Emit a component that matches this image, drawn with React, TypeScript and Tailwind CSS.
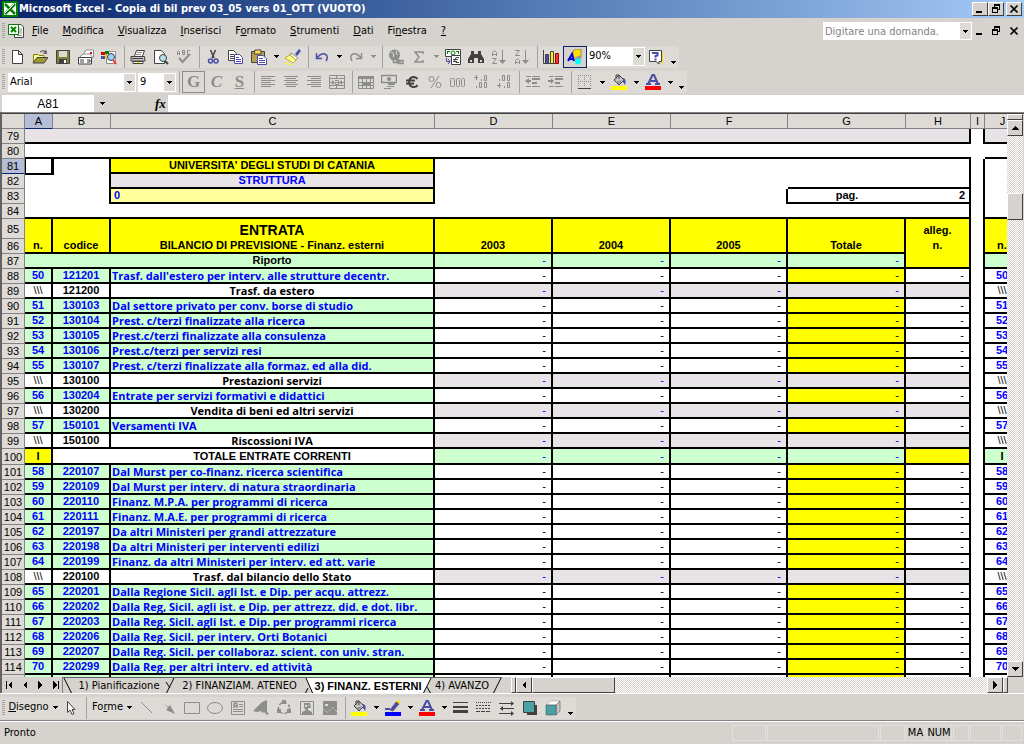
import { ReactNode } from 'react';
import clsx from 'clsx';

type Kind = 'item' | 'sub' | 'total';
type Row = [number, Kind, string, string, string];

const rows: Row[] = [
    [88, 'item', '50', '121201', "Trasf. dall'estero per interv. alle strutture decentr."],
    [89, 'sub', '\\\\\\', '121200', 'Trasf. da estero'],
    [90, 'item', '51', '130103', 'Dal settore privato per conv. borse di studio'],
    [91, 'item', '52', '130104', 'Prest. c/terzi finalizzate alla ricerca'],
    [92, 'item', '53', '130105', 'Prest.c/terzi finalizzate alla consulenza'],
    [93, 'item', '54', '130106', 'Prest.c/terzi per servizi resi'],
    [94, 'item', '55', '130107', 'Prest. c/terzi finalizzate alla formaz. ed alla did.'],
    [95, 'sub', '\\\\\\', '130100', 'Prestazioni servizi'],
    [96, 'item', '56', '130204', 'Entrate per servizi formativi e didattici'],
    [97, 'sub', '\\\\\\', '130200', 'Vendita di beni ed altri servizi'],
    [98, 'item', '57', '150101', 'Versamenti IVA'],
    [99, 'sub', '\\\\\\', '150100', 'Riscossioni IVA'],
    [100, 'total', 'I', '', 'TOTALE ENTRATE CORRENTI'],
    [101, 'item', '58', '220107', 'Dal Murst per co-finanz. ricerca scientifica'],
    [102, 'item', '59', '220109', 'Dal Murst per interv. di natura straordinaria'],
    [103, 'item', '60', '220110', 'Finanz. M.P.A. per programmi di ricerca'],
    [104, 'item', '61', '220111', 'Finanz. M.A.E. per programmi di ricerca'],
    [105, 'item', '62', '220197', 'Da altri Ministeri per grandi attrezzature'],
    [106, 'item', '63', '220198', 'Da altri Ministeri per interventi edilizi'],
    [107, 'item', '64', '220199', 'Finanz. da altri Ministeri per interv. ed att. varie'],
    [108, 'sub', '\\\\\\', '220100', 'Trasf. dal bilancio dello Stato'],
    [109, 'item', '65', '220201', 'Dalla Regione Sicil. agli Ist. e Dip. per acqu. attrezz.'],
    [110, 'item', '66', '220202', 'Dalla Reg, Sicil. agli ist. e Dip. per attrezz. did. e dot. libr.'],
    [111, 'item', '67', '220203', 'Dalla Reg. Sicil. agli Ist. e Dip. per programmi ricerca'],
    [112, 'item', '68', '220206', 'Dalla Reg. Sicil. per interv. Orti Botanici'],
    [113, 'item', '69', '220207', 'Dalla Reg. Sicil. per collaboraz. scient. con univ. stran.'],
    [114, 'item', '70', '220299', 'Dalla Reg. per altri interv. ed attività'],
];

const G = '#8c8e8c';
const D = '#424142';
const N = '#4a4da5';

const bucket = (bar: string) => (
    <>
        <path d="M3 6L8 1L13 6L8 11L3 6Z" fill="#c6c3c6" stroke={D} />
        <path d="M5 5V1H8V5" stroke={D} fill="none" />
        <path d="M5 8L11 6L8 10Z" fill={G} />
        <path d="M12 4Q16 5 14 11L12 8Z" fill={N} />
        <path d="M0 12H16V16H0Z" fill={bar} />
    </>
);

const letterA = (
    <>
        <path d="M3 10L7.500 1H9L13 10M5 7H11" stroke={N} strokeWidth="2" fill="none" />
        <path d="M1 9H6V11H1ZM10 9H15V11H10Z" fill={N} />
        <path d="M0 12H16V16H0Z" fill="#ff0000" />
    </>
);

const sheet = (
    <>
        <path d="M6.500 1.500H13L15.500 4V14.500H6.500Z" fill="#fff" stroke={D} />
        <path d="M11 6H14M11 8H14M11 10H14M9 12.500H14" stroke={G} />
        <path d="M0.500 1.500H10.500V11.500H0.500Z" fill="#fff" stroke="#008200" />
        <path d="M3 4L8 9M8 4L3 9" stroke="#008200" strokeWidth="2" />
    </>
);

const lines = (xs: [number, number][]) => xs.map(([a, b], i) => (
    <path key={i} d={`M${a} ${2 + i * 2}H${b}V${3 + i * 2}H${a}Z`} fill={G} />
));

const icons: Record<string, ReactNode> = {
    logo: (
        <>
            <path d="M0 0H16V16H0Z" fill="#008200" />
            <path d="M2 2H14V14H2Z" fill="#fff" />
            <path d="M3 3L13 13M13 3L3 13" stroke="#008200" strokeWidth="2.500" />
            <path d="M3 12L12 3" stroke="#fff" />
        </>
    ),
    sheet,
    nuovo: <path d="M3.500 1.500H9.500L13.500 5.500V14.500H3.500ZM9.500 1.500V5.500H13.500" fill="#fff" stroke={D} />,
    apri: (
        <>
            <path d="M1.500 14V5.500H6L7 6.500H12V9" fill="#ffff9c" stroke="#848200" />
            <path d="M1 14L5 8.500H16L12 14Z" fill="#9c9a31" stroke={D} />
            <path d="M8 3Q11 0 14 3M14 1V5M11 4H15" stroke={D} fill="none" />
        </>
    ),
    salva: (
        <>
            <path d="M1.500 1.500H14.500V14.500H1.500Z" fill="#84823a" stroke={D} />
            <path d="M4 2H12V8H4Z" fill="#dedbd6" />
            <path d="M4 10H12V14H4Z" fill={D} />
            <path d="M9 11H11V14H9Z" fill="#fff" />
        </>
    ),
    posta: (
        <>
            <path d="M5.500 5L8 1H15.500V8L12 9" fill="#fff" stroke={G} />
            <path d="M12 3H14V5H12Z" fill="#ff0000" />
            <path d="M1 9L5 5H12L15 9" fill="#fff" stroke={G} />
            <path d="M0.500 8.500H13.500V15H0.500Z" fill="#fff" stroke={D} />
            <path d="M2 11H6M2 13H6M9 11H12V13H9" stroke={D} fill="none" />
        </>
    ),
    ricerca: (
        <>
            <path d="M5.500 2.500H14.500V14.500H5.500Z" fill="#fff" stroke={G} />
            <path d="M0 3H4V6H0Z" fill="#e70000" />
            <path d="M4 2H8V5H4Z" fill="#008200" />
            <path d="M0 7H4V10H0Z" fill={N} />
            <path d="M4 6H8V9H4Z" fill="#ffcf00" />
            <circle cx="10" cy="8" r="3.500" fill="#9ccfff" stroke={D} />
            <path d="M12 11L15 15" stroke="#ff3131" strokeWidth="2" />
        </>
    ),
    stampa: (
        <>
            <path d="M4.500 7L6.500 1.500H14.500L12.500 7" fill="#fff" stroke={D} />
            <path d="M7 3.500H12M6 5.500H11" stroke={G} />
            <path d="M1 7.500H14.500L15 12H1Z" fill="#c6c3c6" stroke={D} />
            <path d="M2 9H13V10H2Z" fill={D} />
            <path d="M3 12.500H13V14.500H3Z" fill="#fff" stroke={D} />
            <path d="M7 13H10V14H7Z" fill="#ffff00" />
        </>
    ),
    anteprima: (
        <>
            <path d="M1.500 1.500H8L11.500 4.500V14.500H1.500Z" fill="#fff" stroke={D} />
            <circle cx="10" cy="9" r="3.500" fill="#b5dfe7" stroke={D} />
            <path d="M12 12L15 15" stroke={D} strokeWidth="2" />
        </>
    ),
    abc: (
        <>
            <path d="M1.500 6V2.500L2.500 1.500L3.500 2.500V6M1.500 4.500H3.500M6.500 1.500V5.500H8.500V1.500ZM6.500 3.500H8.500M14 1.500H11.500V5.500H14" stroke={G} fill="none" />
            <path d="M3 9L6.500 13L14 5" stroke={G} strokeWidth="2" fill="none" />
        </>
    ),
    taglia: (
        <>
            <path d="M5.500 1L9 9M10.500 1L7 9" stroke={D} strokeWidth="1.500" />
            <circle cx="5.500" cy="12" r="2" fill="none" stroke={N} strokeWidth="1.500" />
            <circle cx="11" cy="12" r="2" fill="none" stroke={N} strokeWidth="1.500" />
        </>
    ),
    copia: (
        <>
            <path d="M0.500 1.500H5.500L8.500 4.500V11.500H0.500Z" fill="#fff" stroke={D} />
            <path d="M2 5.500H6M2 7.500H6M2 9.500H6" stroke={D} />
            <path d="M6.500 5.500H11.500L14.500 8.500V14.500H6.500Z" fill="#fff" stroke={N} />
            <path d="M8 8.500H11M8 10.500H13M8 12.500H13" stroke={N} />
        </>
    ),
    incolla: (
        <>
            <path d="M0.500 2.500H13.500V13.500H0.500Z" fill="#b5a24a" stroke={D} />
            <path d="M4 1H10V5H3Z" fill="#ffdf5a" stroke={D} />
            <path d="M6.500 6.500H12L15.500 9.500V15.500H6.500Z" fill="#fff" stroke={N} />
            <path d="M8 9.500H12M8 11.500H14M8 13.500H14" stroke={N} />
        </>
    ),
    pennello: (
        <>
            <path d="M10 5L14 0L16 2L12 7Z" fill={N} />
            <path d="M6 4L13 9L11 11L5 6Z" fill="#fff" stroke={G} />
            <path d="M5 6L11 11L8 14L0 9Z" fill="#ffff9c" stroke="#c6b600" />
            <path d="M0 14H3V15H0ZM4 15H7V16H4Z" fill="#ffff00" />
        </>
    ),
    annulla: <path d="M2.500 4V9.500H8M3 9Q7 4 11 5Q15 7 12 12" stroke={N} strokeWidth="1.500" fill="none" />,
    ripeti: <path d="M13.500 4V9.500H8M13 9Q9 4 5 5Q1 7 4 12" stroke={G} strokeWidth="1.500" fill="none" />,
    globo: (
        <>
            <circle cx="6.500" cy="6" r="5.500" fill={G} />
            <path d="M3 3L6 5L5 8M8 2L9 6" stroke="#dedbd6" fill="none" />
            <path d="M5.500 10.500H10V13.500H5.500ZM10.500 11.500H15V14.500H10.500ZM8 12.500H13" fill="#dedbd6" stroke={G} strokeWidth="1.500" />
        </>
    ),
    somma: <path d="M12 5V3H4L8 8L4 13H12V11" stroke={G} strokeWidth="1.500" fill="none" />,
    cambio: (
        <>
            <path d="M0.500 0.500H15.500V7.500H0.500Z" fill="#fff" stroke={D} />
            <path d="M2 2H5V3H3V5H2ZM14 2H11V3H13V5H14Z" fill="#008200" />
            <circle cx="8" cy="4" r="2" fill="#fff" stroke="#008200" />
            <path d="M6.500 6.500H15.500V15.500H6.500Z" fill="#fff" stroke={D} />
            <path d="M14 8.500H11L9.500 11L11 13.500H14M8 10.500H13M8 12.500H12" stroke={D} fill="none" />
            <path d="M1.500 9V12.500H5M3 10L5 12.500L3 15" stroke={N} fill="none" />
        </>
    ),
    binocolo: (
        <path d="M3 2H6V5H10V2H13V5L16 10V14H10V9H6V14H0V10L3 5ZM2 11V13H4V11ZM12 11V13H14V11Z" fill={D} fillRule="evenodd" />
    ),
    az: (
        <>
            <path d="M1.500 7V3.500L3.500 1.500L5.500 3.500V7M1.500 5.500H5.500M1 9.500H5.500L1.500 14.500H6" stroke={G} fill="none" />
            <path d="M11 1H12V11H15L11.500 15L8 11H11Z" fill={G} />
        </>
    ),
    za: (
        <>
            <path d="M1 1.500H5.500L1.500 6.500H6M1.500 15V11.500L3.500 9.500L5.500 11.500V15M1.500 13.500H5.500" stroke={G} fill="none" />
            <path d="M11 1H12V11H15L11.500 15L8 11H11Z" fill={G} />
        </>
    ),
    grafico: (
        <>
            <path d="M0.500 1V14.500H15" stroke={D} fill="none" />
            <path d="M2.500 5.500H5.500V14.500H2.500Z" fill={N} stroke={D} />
            <path d="M7.500 2.500H10.500V14.500H7.500Z" fill="#ffef00" stroke={D} />
            <path d="M12.500 4.500H15.500V14.500H12.500Z" fill="#ff3131" stroke="#9c0000" />
        </>
    ),
    disegno: (
        <>
            <path d="M6 2L9 0H14V7L11 9H6Z" fill="#ffdf00" stroke={D} strokeWidth="0.500" />
            <path d="M10 7H15L13 12H8Z" fill="#9c9a9c" />
            <path d="M1 12L5 5L7 12M3 10H7" stroke="#0000ce" strokeWidth="2" fill="none" />
            <circle cx="11" cy="12.500" r="3" fill="#00ffff" />
        </>
    ),
    aiuto: (
        <>
            <path d="M1.500 1.500H13.500V12.500H11V15L8 12.500H1.500Z" fill="#fff" stroke={D} />
            <path d="M14.500 3V13.500H12" stroke="#ffdf00" fill="none" />
            <path d="M5 5V4H9.500V6.500L7.500 7V8.500M7.500 9.500V11.500" stroke={N} strokeWidth="2" fill="none" />
        </>
    ),
    sinistra: lines([[1, 15], [1, 11], [1, 15], [1, 11], [1, 15], [1, 11]]),
    centro: lines([[1, 15], [3, 13], [1, 15], [3, 13], [1, 15], [3, 13]]),
    destra: lines([[1, 15], [5, 15], [1, 15], [5, 15], [1, 15], [5, 15]]),
    unisci: (
        <>
            <path d="M0.500 1.500H15.500V14.500H0.500ZM0.500 4.500H15.500M0.500 11.500H15.500M7.500 1.500V4.500M7.500 11.500V14.500" stroke={G} fill="none" />
            <path d="M1 8.500H5M12 8.500H15M6 6.500H9.500V10.500H6.500V8.500H9" stroke={G} fill="none" />
            <path d="M3 6L6 8.500L3 11ZM13 6L10 8.500L13 11Z" fill={G} />
        </>
    ),
    tabella: (
        <>
            <path d="M0 2H16V5H0Z" fill={G} />
            <path d="M0.500 5V14.500H15.500V5M0.500 8.500H15.500M0.500 11.500H15.500M4.500 5V14M8.500 5V14M12.500 5V14" stroke={G} fill="none" />
            <path d="M5 8H12V12H5Z" fill={G} />
        </>
    ),
    valuta: (
        <>
            <path d="M0.500 1.500H15.500V8.500H0.500Z" stroke={G} strokeWidth="1.500" fill="none" />
            <circle cx="8" cy="5" r="2" fill={G} />
            <path d="M7 9H14V11H7ZM6 12H13V13H6ZM3 14H10V15H3Z" fill={G} />
        </>
    ),
    euro: <path d="M13.500 5Q12 2.500 9 3Q5 4 5 8Q5 12 9 13Q12 13.500 13.500 11M2 6.500H11M2 9.500H10" stroke={D} strokeWidth="2" fill="none" />,
    percento: (
        <>
            <circle cx="4.500" cy="5" r="2.500" fill="none" stroke={G} />
            <circle cx="11.500" cy="11" r="2.500" fill="none" stroke={G} />
            <path d="M12 2L4 14" stroke={G} />
        </>
    ),
    migliaia: (
        <>
            <rect x="0.500" y="4.500" width="4" height="8" rx="1" stroke={G} fill="none" />
            <rect x="6.500" y="4.500" width="3" height="8" rx="1" stroke={G} fill="none" />
            <rect x="11.500" y="4.500" width="3" height="8" rx="1" stroke={G} fill="none" />
        </>
    ),
    piudec: (
        <>
            <path d="M1 3.500H5M3.500 1V6M11.500 1.500H13.500V6.500H11.500ZM6.500 8.500H8.500V13.500H6.500ZM11.500 8.500H13.500V13.500H11.500Z" stroke={G} fill="none" />
            <path d="M8 5H9V7H8ZM3 12H4V14H3Z" fill={G} />
        </>
    ),
    menodec: (
        <>
            <path d="M1 11.500H5M3.500 9V14M6.500 1.500H8.500V6.500H6.500ZM11.500 1.500H13.500V6.500H11.500ZM11.500 8.500H13.500V13.500H11.500Z" stroke={G} fill="none" />
            <path d="M3 5H4V7H3ZM8 12H9V14H8Z" fill={G} />
        </>
    ),
    rientroMeno: (
        <>
            <path d="M1 2H6V3H1ZM7 2H15V3H7ZM7 4H15V6H7ZM7 8H12V10H7ZM1 12H6V13H1ZM7 12H15V13H7Z" fill={G} />
            <path d="M0 7L4 4V6H6V8H4V10Z" fill={G} />
        </>
    ),
    rientroPiu: (
        <>
            <path d="M1 2H6V3H1ZM7 2H15V3H7ZM7 4H15V6H7ZM7 8H12V10H7ZM1 12H6V13H1ZM7 12H15V13H7Z" fill={G} />
            <path d="M6 7L3 4V6H0V8H3V10Z" fill={G} />
        </>
    ),
    bordi: (
        <>
            <path d="M1.500 1V13M7.500 1V13M13.500 1V13M1 1.500H14M1 7.500H14" stroke={G} strokeDasharray="1 1" fill="none" />
            <path d="M1 14H14V15H1Z" fill={D} />
        </>
    ),
    riempi: bucket('#ffff00'),
    colore: letterA,
    cursore: <path d="M4.500 1.500V12.500L7 10L9 14.500L11 13.500L9 9.500H12Z" fill="#fff" stroke={D} />,
    linea: <path d="M3 2L14 13" stroke={G} />,
    freccia: <path d="M2 2L7 7L9 5L14 14L5 10L7 8Z" fill={G} />,
    rettangolo: <path d="M0.500 2.500H15.500V13.500H0.500Z" stroke={G} fill="none" />,
    ovale: <ellipse cx="8" cy="8" rx="7.500" ry="5.500" stroke={G} fill="none" />,
    casella: (
        <>
            <path d="M1.500 1.500H14.500V14.500H1.500Z" stroke={G} fill="none" />
            <path d="M4 8V4L5.500 3L7 4V8M4 6H7" stroke={G} strokeWidth="1.500" fill="none" />
            <path d="M9 4H13V5H9ZM9 6H13V7H9ZM3 9H13V10H3ZM3 11H13V12H3Z" fill={G} />
        </>
    ),
    wordart: <path d="M0 11L9 2L14 0V12L16 14L14 15L11 12L9 13L8 11L4 12Z" fill={G} />,
    diagramma: (
        <>
            <circle cx="8" cy="8" r="5.500" fill="none" stroke={G} strokeWidth="1.500" strokeDasharray="3 2" />
            <path d="M6 0H10V4H6ZM1 9H5V13H1ZM11 9H15V13H11Z" fill={G} />
        </>
    ),
    clipart: (
        <>
            <path d="M1.500 1.500H14.500V14.500H1.500Z" stroke={G} fill="none" />
            <path d="M5 3H11L12 8H9V10L13 12V14H3V12L7 10L5 8Z" fill={G} />
            <path d="M6 5H8V7H6ZM9 5H10V6H9Z" fill="#dedbd6" />
        </>
    ),
    immagine: (
        <>
            <path d="M1 1H15V15H1Z" fill={G} />
            <path d="M3 4H6V6H3Z" fill="#dedbd6" />
            <path d="M1 9.500L6 12.500L10.500 7.500L15 12" stroke="#dedbd6" strokeDasharray="1 1" fill="none" />
        </>
    ),
    penna: (
        <>
            <path d="M14 0L16 2L13 4L11 2Z" fill="#ffdf00" />
            <path d="M11 2L14 4L8 11L5 10Z" fill={N} stroke={D} strokeWidth="0.500" />
            <path d="M0 9H5" stroke={N} strokeWidth="2" />
            <path d="M0 12H16V16H0Z" fill="#0000ff" />
        </>
    ),
    spessore: <path d="M0 2H15V3H0ZM0 6H15V8H0ZM0 10H15V13H0Z" fill={D} />,
    tratto: (
        <>
            <path d="M0 2.500H15" stroke={D} strokeDasharray="1 1" />
            <path d="M0 5.500H15M0 8.500H15" stroke={D} strokeDasharray="2 1" />
            <path d="M0 11.500H15" stroke={D} strokeDasharray="4 1" />
        </>
    ),
    frecce: (
        <>
            <path d="M0 3.500H14M1 8.500H15M0 13.500H14" stroke={D} />
            <path d="M12 1L15 3.500L12 6ZM4 6L1 8.500L4 11ZM12 11L15 13.500L12 16Z" fill={D} />
        </>
    ),
    ombra: (
        <>
            <path d="M5 5H15V15H5Z" fill={D} />
            <path d="M1.500 1.500H12.500V12.500H1.500Z" fill="#4aa2a5" stroke={D} />
        </>
    ),
    cubo: (
        <>
            <path d="M1 5L6 1H15L11 5Z" fill="#fff" stroke={G} strokeWidth="0.500" />
            <path d="M11 5L15 1V11L11 15Z" fill="#c6c3c6" stroke={D} strokeWidth="0.500" />
            <path d="M1 5H11V15H1Z" fill="#4aa2a5" stroke={D} strokeWidth="0.500" />
        </>
    ),
};

function Icon({ name }: { name: string }) {
    return <svg viewBox="0 0 16 16" className="h-4 w-4 shrink-0">{icons[name]}</svg>;
}

function Arrow({ grey }: { grey?: boolean }) {
    return (
        <svg viewBox="0 0 5 3" className="h-[3px] w-[5px] shrink-0" shapeRendering="crispEdges">
            <path d="M0 0H5V1H4V2H3V3H2V2H1V1H0Z" fill={grey ? G : '#000'} />
        </svg>
    );
}

function Tool({ name, on }: { name: string; on?: boolean }) {
    return (
        <button aria-label={name} className={clsx('flex h-[22px] w-6 shrink-0 items-center -mr-px pl-[3px]', on && 'border border-[#08246b] bg-[#d6d3ce]')}>
            <Icon name={name} />
        </button>
    );
}

function Drop({ grey }: { grey?: boolean }) {
    return <button aria-label="Apri elenco" className="flex h-[22px] w-[11px] shrink-0 items-center justify-center"><Arrow grey={grey} /></button>;
}

function More() {
    return <button aria-label="Altri pulsanti" className="flex h-[22px] w-[11px] shrink-0 items-end justify-center pb-1"><Arrow /></button>;
}

function Sep() {
    return <div className="flex h-[22px] w-[6px] shrink-0 justify-center"><div className="w-px bg-[#a5a2a5]" /></div>;
}

function Grip() {
    return <div className="mr-px ml-[2px] h-4 w-[3px] shrink-0 bg-[repeating-linear-gradient(#a5a2a5_0_1px,transparent_1px_2px)]" />;
}

function Combo({ label, value, className }: { label: string; value: string; className: string }) {
    return (
        <div className={clsx('relative h-[19px] shrink-0 bg-white', className)}>
            <select aria-label={label} className="h-full w-full appearance-none bg-white pl-[2px] outline-none">
                <option>{value}</option>
            </select>
            <div className="pointer-events-none absolute top-px right-px bottom-px flex w-[11px] items-center justify-center bg-[#dedbd6]"><Arrow /></div>
        </div>
    );
}

const bevel = 'border border-t-white border-l-white border-r-[#424142] border-b-[#424142] bg-[#d6d3ce]';
const track = 'bg-[repeating-conic-gradient(#fff_0_25%,#d6d3ce_0_50%)] bg-[length:2px_2px]';

function Finestra({ raised }: { raised?: boolean }) {
    const box = clsx('flex h-[14px] w-4 items-center justify-center', raised && bevel);
    return (
        <div className="flex shrink-0 pr-[2px] text-black">
            <button aria-label="Riduci a icona" className={box}>
                <svg viewBox="0 0 10 10" className="h-[10px] w-[10px]" shapeRendering="crispEdges"><path d="M1 7H7V9H1Z" /></svg>
            </button>
            <button aria-label="Ripristina" className={box}>
                <svg viewBox="0 0 10 10" className="h-[10px] w-[10px]" shapeRendering="crispEdges">
                    <path d="M3 0H9V6H7V5H8V2H4V3H3ZM1 3H7V9H1ZM2 5V8H6V5Z" fillRule="evenodd" />
                </svg>
            </button>
            <button aria-label="Chiudi" className={clsx(box, 'ml-[2px]')}>
                <svg viewBox="0 0 10 10" className="h-[10px] w-[10px]"><path d="M1.500 1.500L8.500 8.500M8.500 1.500L1.500 8.500" stroke="#000" strokeWidth="1.700" /></svg>
            </button>
        </div>
    );
}

const menu = [['', 'F', 'ile'], ['', 'M', 'odifica'], ['', 'V', 'isualizza'], ['', 'I', 'nserisci'], ['F', 'o', 'rmato'], ['', 'S', 'trumenti'], ['', 'D', 'ati'], ['Fi', 'n', 'estra'], ['', '?', '']];

/* Celle del foglio */
const K = 'border-r-2 border-b-2 border-black';
const R = 'border-r-2 border-black';
const B = 'border-b-2 border-black';
const blue = 'text-[#0000ff]';
const green = 'bg-[#ceffce]';
const grey = 'bg-[#e7e3e7]';
const yellow = 'bg-[#ffff00]';
const dash = 'pr-[5px] text-right font-normal';

function Cell({ c, children, span }: { c?: string; children?: ReactNode; span?: number }) {
    return <td colSpan={span} className={clsx('overflow-hidden p-0 whitespace-nowrap', c)}>{children}</td>;
}

function Tr({ n, children, h = 'h-[15px] leading-[13px]' }: { n: number | string; children: ReactNode; h?: string }) {
    return (
        <tr className={h}>
            <th scope="row" className={clsx('border-r border-b border-[#848284] p-0 text-center font-normal', n === 81 ? 'border-b-[#08246b] bg-[#b5bed6]' : 'bg-[#dedbd6]')}>{n}</th>
            {children}
        </tr>
    );
}

function DataRow({ row: [n, kind, a, b, c] }: { row: Row }) {
    const item = kind === 'item';
    const total = kind === 'total';
    const left = item ? clsx(green, blue) : 'bg-white';
    const num = item ? 'bg-white' : clsx(total ? green : grey, blue);
    return (
        <Tr n={n} h={total ? 'h-4 leading-[14px]' : undefined}>
            <Cell c={clsx(K, 'text-center', total ? yellow : left, kind === 'sub' && 'font-normal')}>{a}</Cell>
            <Cell c={clsx(total ? B : K, 'text-center', left)}>{b}</Cell>
            <Cell c={clsx(K, left, total ? 'text-center' : "font-['Open_Sans',sans-serif]", item ? 'pl-px' : 'text-center')}>{c}</Cell>
            {[0, 1, 2].map(i => <Cell key={i} c={clsx(K, num, dash)}>-</Cell>)}
            <Cell c={clsx(K, item ? yellow : num, dash)}>-</Cell>
            <Cell c={clsx(K, item ? 'bg-white' : total ? yellow : grey, dash)}>{item && '-'}</Cell>
            <Cell c={R} />
            <Cell c={clsx(K, 'text-center', item && blue, total && green, kind === 'sub' && 'font-normal')}>{a}</Cell>
        </Tr>
    );
}

function Foglio() {
    return (
        <table className="w-[1019px] table-fixed border-separate border-spacing-0 bg-white font-['Liberation_Sans',Arial,sans-serif] text-[11px] font-bold">
            <colgroup>
                <col className="w-[23px]" /><col className="w-[28px]" /><col className="w-[58px]" /><col className="w-[324px]" />
                <col className="w-[118px]" /><col className="w-[118px]" /><col className="w-[117px]" /><col className="w-[118px]" />
                <col className="w-[65px]" /><col className="w-[14px]" /><col className="w-[36px]" />
            </colgroup>
            <thead>
                <tr className="h-[15px] leading-[14px]">
                    {['', 'A', 'B', 'C', 'D', 'E', 'F', 'G', 'H', 'I', 'J'].map(l => (
                        <th key={l} scope="col" className={clsx('border-r border-b border-[#848284] p-0 font-normal', l === 'A' ? 'border-b-[#08246b] bg-[#b5bed6]' : 'bg-[#dedbd6]')}>{l}</th>
                    ))}
                </tr>
            </thead>
            <tbody>
                <Tr n={79}><Cell span={8} c={clsx(K, grey)} /><Cell c={R} /><Cell c={clsx(K, grey)} /></Tr>
                <Tr n={80}><Cell span={8} c={B} /><Cell /><Cell c={B} /></Tr>
                <Tr n={81}>
                    <td className="relative p-0">
                        <div className="absolute inset-x-0 -top-px -bottom-px border-2 border-t border-l border-black shadow-[1px_0_0_#000]" />
                    </td>
                    <Cell c={R} />
                    <Cell c={clsx(K, yellow, 'text-center')}>UNIVERSITA' DEGLI STUDI DI CATANIA</Cell>
                    <Cell span={5} c={R} /><Cell c={R} /><Cell />
                </Tr>
                <Tr n={82}>
                    <Cell /><Cell c={R} />
                    <Cell c={clsx(K, grey, blue, 'text-center')}>STRUTTURA</Cell>
                    <Cell span={3} /><Cell c={B} /><Cell c={K} /><Cell c={R} /><Cell />
                </Tr>
                <Tr n={83}>
                    <Cell /><Cell c={R} />
                    <Cell c={clsx(K, blue, 'bg-[#ffff9c] pl-[3px]')}>0</Cell>
                    <Cell span={3} c={R} />
                    <Cell c={clsx(B, 'text-center')}>pag.</Cell>
                    <Cell c={clsx(K, 'pr-1 text-right')}>2</Cell>
                    <Cell c={R} /><Cell />
                </Tr>
                <Tr n={84}><Cell span={8} c={K} /><Cell c={R} /><Cell c={B} /></Tr>
                <Tr n={85} h="h-5 leading-[18px]">
                    {['', '', 'ENTRATA', '', '', '', '', 'alleg.'].map((t, i) => (
                        <Cell key={i} c={clsx(R, 'text-center align-bottom', yellow, i === 2 && 'text-[14px]')}>{t}</Cell>
                    ))}
                    <Cell c={R} /><Cell c={yellow} />
                </Tr>
                <Tr n={86}>
                    {['n.', 'codice', 'BILANCIO DI PREVISIONE - Finanz. esterni', '2003', '2004', '2005', 'Totale'].map(t => (
                        <Cell key={t} c={clsx(K, yellow, 'text-center')}>{t}</Cell>
                    ))}
                    <Cell c={clsx(R, yellow, 'text-center align-top')}>n.</Cell>
                    <Cell c={R} /><Cell c={clsx(K, yellow, 'text-center')}>n.</Cell>
                </Tr>
                <Tr n={87}>
                    <Cell span={2} c={clsx(B, green)} />
                    <Cell c={clsx(K, green, 'text-center')}>Riporto</Cell>
                    {[0, 1, 2, 3].map(i => <Cell key={i} c={clsx(K, green, blue, dash)}>-</Cell>)}
                    <Cell c={clsx(K, yellow)} />
                    <Cell c={R} /><Cell c={clsx(K, green)} />
                </Tr>
                {rows.map(r => <DataRow key={r[0]} row={r} />)}
                <Tr n="">{[0, 1, 2, 3, 4, 5, 6, 7, 8, 9].map(i => <Cell key={i} c={clsx(R, i < 3 && green, i === 6 && yellow)} />)}</Tr>
            </tbody>
        </table>
    );
}

function ScrollBtn({ d, label }: { d: string; label: string }) {
    return (
        <button aria-label={label} className={clsx('flex h-4 w-4 shrink-0 items-center justify-center', bevel)}>
            <svg viewBox="0 0 8 8" className="h-2 w-2" shapeRendering="crispEdges"><path d={d} /></svg>
        </button>
    );
}

/* Bordo obliquo fra due linguette */
function Edge({ d, active }: { d: string; active?: 'l' | 'r' }) {
    return (
        <svg viewBox="0 0 10 16" className="h-4 w-[10px] shrink-0">
            {active === 'l' && <path d="M2 0H10V16H9Z" fill="#fff" />}
            {active === 'r' && <path d="M0 0H9L1 16H0Z" fill="#fff" />}
            <path d={d} stroke="#000" fill="none" />
        </svg>
    );
}

function Nav({ d, label }: { d: string; label: string }) {
    return (
        <button aria-label={label} className="flex h-4 w-[15px] items-center justify-center">
            <svg viewBox="0 0 8 8" className="h-2 w-2" shapeRendering="crispEdges"><path d={d} /></svg>
        </button>
    );
}

const bar = 'flex w-fit items-center rounded-[3px] bg-[#dedbd6]';

export default function App() {
    return (
        <div className="flex h-screen flex-col overflow-hidden bg-[#d6d3ce] font-['DejaVu_Sans_Condensed','DejaVu_Sans',sans-serif] text-[11px] text-black">
            <header className="flex h-[18px] shrink-0 items-center bg-linear-to-r from-[#08246b] to-[#a5cbf7] pl-[2px] text-white">
                <Icon name="logo" />
                <h1 className="flex-1 truncate pl-px font-bold">Microsoft Excel - Copia di bil prev 03_05 vers 01_OTT (VUOTO)</h1>
                <Finestra raised />
            </header>

            <nav className="flex h-[26px] shrink-0 items-center">
                <Grip />
                <div className="px-[2px]"><Icon name="sheet" /></div>
                <div className="flex flex-1 gap-[14px] pl-[6px]">
                    {menu.map(([a, u, b]) => <button key={u + b}>{a}<span className="underline">{u}</span>{b}</button>)}
                </div>
                <div className="relative h-[18px] w-[149px] bg-white">
                    <input aria-label="Domanda" placeholder="Digitare una domanda." className="h-full w-full bg-transparent pl-[2px] outline-none placeholder:text-[#848284]" />
                    <div className="pointer-events-none absolute top-px right-px bottom-px flex w-[11px] items-center justify-center bg-[#dedbd6]"><Arrow /></div>
                </div>
                <Finestra />
            </nav>

            <div className="flex h-[25px] shrink-0 items-center">
                <div className={bar}>
                    <Grip />
                    {['nuovo', 'apri', 'salva', 'posta', 'ricerca'].map(n => <Tool key={n} name={n} />)}
                    <Sep />
                    {['stampa', 'anteprima', 'abc'].map(n => <Tool key={n} name={n} />)}
                    <Sep />
                    {['taglia', 'copia', 'incolla'].map(n => <Tool key={n} name={n} />)}
                    <Drop />
                    <Tool name="pennello" />
                    <Sep />
                    <Tool name="annulla" /><Drop />
                    <Tool name="ripeti" /><Drop grey />
                    <Sep />
                    <Tool name="globo" />
                    <Tool name="somma" /><Drop grey />
                    {['cambio', 'binocolo', 'az', 'za'].map(n => <Tool key={n} name={n} />)}
                    <Sep />
                    <Tool name="grafico" />
                    <Tool name="disegno" on />
                    <Combo label="Zoom" value="90%" className="ml-px w-[58px]" />
                    <Tool name="aiuto" />
                    <More />
                </div>
            </div>

            <div className="flex h-[26px] shrink-0 items-center">
                <div className={bar}>
                    <Grip />
                    <Combo label="Tipo di carattere" value="Arial" className="ml-[2px] w-[128px]" />
                    <Combo label="Dimensione carattere" value="9" className="ml-[2px] w-[38px]" />
                    <Sep />
                    <div className="flex font-['Liberation_Serif',serif] text-[17px] leading-5 font-bold text-[#8c8e8c]">
                        <button className="h-[22px] w-[23px] border border-[#8c8e8c]">G</button>
                        <button className="h-[22px] w-[23px] italic">C</button>
                        <button className="h-[22px] w-[23px] underline">S</button>
                    </div>
                    <Sep />
                    {['sinistra', 'centro', 'destra', 'unisci'].map(n => <Tool key={n} name={n} />)}
                    <Sep />
                    {['tabella', 'valuta', 'euro', 'percento', 'migliaia', 'piudec', 'menodec'].map(n => <Tool key={n} name={n} />)}
                    <Sep />
                    <Tool name="rientroMeno" /><Tool name="rientroPiu" />
                    <Sep />
                    <Tool name="bordi" /><Drop />
                    <Tool name="riempi" /><Drop />
                    <Tool name="colore" /><Drop />
                    <More />
                </div>
            </div>

            <div className="flex h-[17px] shrink-0 items-center pl-[2px]">
                <input aria-label="Casella nome" defaultValue="A81" className="h-full w-[92px] bg-white text-center font-['Liberation_Sans',sans-serif] text-[12px] outline-none" />
                <button aria-label="Nomi" className="flex h-full w-4 items-center justify-center"><Arrow /></button>
                <div className="flex-1" />
                <label htmlFor="formula" className="w-[13px] font-['Liberation_Serif',serif] text-[13px] font-bold italic">fx</label>
                <input id="formula" className="h-full w-[calc(100%-166px)] shrink-0 bg-white outline-none" />
            </div>

            <main className="flex min-h-0 flex-1 flex-col border-l-2 border-[#636163]">
                <div className="h-[2px] shrink-0 border-t border-b border-t-[#848284] border-b-[#424142]" />
                <div className="flex min-h-0 flex-1">
                    <div className="min-w-0 flex-1 overflow-hidden"><Foglio /></div>
                    <div className="mr-px flex w-4 shrink-0 flex-col">
                        <div className={clsx('h-[6px] shrink-0', bevel)} />
                        <ScrollBtn label="Su" d="M4 2L8 6H0Z" />
                        <div className={clsx('flex-1 pt-[57px]', track)}><div className={clsx('h-[27px]', bevel)} /></div>
                        <ScrollBtn label="Giù" d="M0 2H8L4 6Z" />
                    </div>
                </div>
                <div className="flex h-4 shrink-0 bg-[#d6d3ce]">
                    <div className="flex border-r border-[#848284]">
                        <Nav label="Primo foglio" d="M0 0H1V8H0ZM6 0V8L2 4Z" />
                        <Nav label="Foglio precedente" d="M6 0V8L2 4Z" />
                        <Nav label="Foglio successivo" d="M2 0V8L6 4Z" />
                        <Nav label="Ultimo foglio" d="M2 0V8L6 4ZM7 0H8V8H7Z" />
                    </div>
                    <div className="flex border-t border-[#636163] leading-4">
                        <Edge d="M1 0L9 16" />
                        <button className="w-[92px]">1) Pianificazione</button>
                        <Edge d="M9 0L1 16M1 4L5 10" />
                        <button className="w-[129px]">2) FINANZIAM. ATENEO</button>
                        <Edge d="M2 0L9 16M4 10L1 16" active="l" />
                        <button className="w-[108px] bg-white font-['Liberation_Sans',sans-serif] font-bold whitespace-nowrap">3) FINANZ. ESTERNI</button>
                        <Edge d="M9 0L1 16M5 9L9 16" active="r" />
                        <button className="w-[60px]">4) AVANZO</button>
                        <Edge d="M9 0L1 16" />
                    </div>
                    <div className="w-[9px]" />
                    <div className={clsx('w-[5px]', bevel)} />
                    <ScrollBtn label="Sinistra" d="M6 0V8L2 4Z" />
                    <div className={clsx('flex flex-1', track)}><div className={clsx('w-[83px]', bevel)} /></div>
                    <ScrollBtn label="Destra" d="M2 0V8L6 4Z" />
                    <div className={clsx('mr-4 w-[5px]', bevel)} />
                </div>
            </main>

            <div className="flex h-7 shrink-0 items-center border-t border-b border-t-white border-b-[#848284] pt-px">
                <div className={bar}>
                    <Grip />
                    <button className="flex h-[22px] w-[54px] items-center justify-center gap-1"><span><span className="underline">D</span>isegno</span><Arrow /></button>
                    <Tool name="cursore" />
                    <Sep />
                    <button className="flex h-[22px] w-[46px] items-center justify-center gap-1"><span>Fo<span className="underline">r</span>me</span><Arrow /></button>
                    {['linea', 'freccia', 'rettangolo', 'ovale', 'casella', 'wordart', 'diagramma', 'clipart', 'immagine'].map(n => <Tool key={n} name={n} />)}
                    <Sep />
                    <Tool name="riempi" /><Drop />
                    <Tool name="penna" /><Drop />
                    <Tool name="colore" /><Drop />
                    {['spessore', 'tratto', 'frecce', 'ombra', 'cubo'].map(n => <Tool key={n} name={n} />)}
                    <More />
                </div>
            </div>

            <footer className="flex h-[23px] shrink-0 items-center gap-px border-t border-white pr-[2px] pl-1">
                <span className="flex-1">Pronto</span>
                <div className="h-4 w-[34px] border border-[#e7dfde]" />
                <div className="h-4 w-[112px] border border-[#e7dfde]" />
                <div className="h-4 w-[25px] border border-[#e7dfde]" />
                <div className="h-4 w-[19px] border border-[#e7dfde] text-center leading-[14px]">MA</div>
                <div className="h-4 w-[26px] border border-[#e7dfde] text-center leading-[14px]">NUM</div>
                <div className="h-4 w-4 border border-[#e7dfde]" />
                <div className="h-4 w-[31px] border border-[#e7dfde]" />
                <div className="h-4 w-5 border border-[#e7dfde]" />
            </footer>
        </div>
    );
}
